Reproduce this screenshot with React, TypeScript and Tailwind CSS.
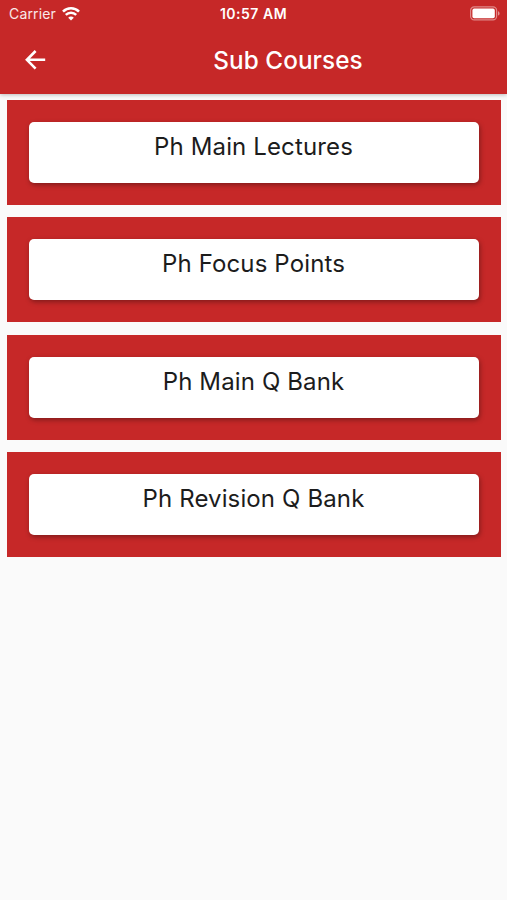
const COURSES = [
  "Ph Main Lectures",
  "Ph Focus Points",
  "Ph Main Q Bank",
  "Ph Revision Q Bank",
] as const;

function WifiIcon() {
  return (
    <svg width="18" height="14" viewBox="0 0 18 14" fill="none">
      <path d="M1 4.6A11.4 11.4 0 0 1 17 4.6" stroke="#fff" strokeWidth="2.6" />
      <path d="M3.8 7.9A7.3 7.3 0 0 1 14.2 7.9" stroke="#fff" strokeWidth="2.4" />
      <path d="M9 13.6L6.2 10.7A3.9 3.9 0 0 1 11.8 10.7Z" fill="#fff" />
    </svg>
  );
}

function BatteryIcon() {
  return (
    <svg width="31" height="15" viewBox="0 0 31 15" fill="none">
      <rect x="0.6" y="0.9" width="26" height="13" rx="3.6" stroke="#fff" strokeOpacity="0.45" strokeWidth="1.2" />
      <rect x="2.4" y="2.6" width="22.4" height="9.6" rx="1.8" fill="#fff" />
      <path d="M28 5.2C30.1 5.9 30.1 8.9 28 9.6Z" fill="#fff" fillOpacity="0.5" />
    </svg>
  );
}

function StatusBar() {
  return (
    <div className="grid h-[27px] grid-cols-3 items-center leading-none text-white">
      <div className="flex items-center gap-[6px] pl-[9px] text-white/90">
        <span className="text-[14px] tracking-[0.15px]">Carrier</span>
        <WifiIcon />
      </div>
      <span className="pt-px text-center text-[14px] font-semibold tracking-[0.5px]">10:57 AM</span>
      <div className="flex justify-end pr-[6px]">
        <BatteryIcon />
      </div>
    </div>
  );
}

function AppBar() {
  return (
    <header className="relative h-[94px] bg-[#c62828] shadow-[0_1px_4px_rgba(0,0,0,0.25)]">
      <StatusBar />
      <div className="flex h-[66px] items-center text-white">
        <button className="ml-[25px] flex w-[21px]" aria-label="Back">
          <svg width="21" height="20" viewBox="0 0 21 20" fill="none">
            <path d="M10.6 1L1.9 9.8L10.6 18.6M2 9.8H20.2" stroke="#fff" strokeWidth="2.6" />
          </svg>
        </button>
        <h1 className="mr-[23px] ml-[46px] flex-1 text-center text-[24.3px] font-medium tracking-[0.05px] whitespace-nowrap">
          Sub Courses
        </h1>
      </div>
    </header>
  );
}

function CourseCard({ title }: { title: string }) {
  return (
    <li className="h-[105px] bg-[#c62828] px-[22px] pt-[22px]">
      <div className="h-[61px] rounded-[5px] bg-white pt-[10px] pr-[1px] text-center text-[24px] leading-[30px] tracking-[0.13px] text-[#1c1c1c] shadow-[1px_2px_5px_rgba(0,0,0,0.35)]">
        {title}
      </div>
    </li>
  );
}

export default function App() {
  return (
    <div className="min-h-screen bg-[#fafafa] font-['Inter',sans-serif]">
      <AppBar />
      <ul className="flex flex-col gap-[12.3px] pt-[6px] pr-[6px] pl-[7px]">
        {COURSES.map((title) => (
          <CourseCard key={title} title={title} />
        ))}
      </ul>
    </div>
  );
}
